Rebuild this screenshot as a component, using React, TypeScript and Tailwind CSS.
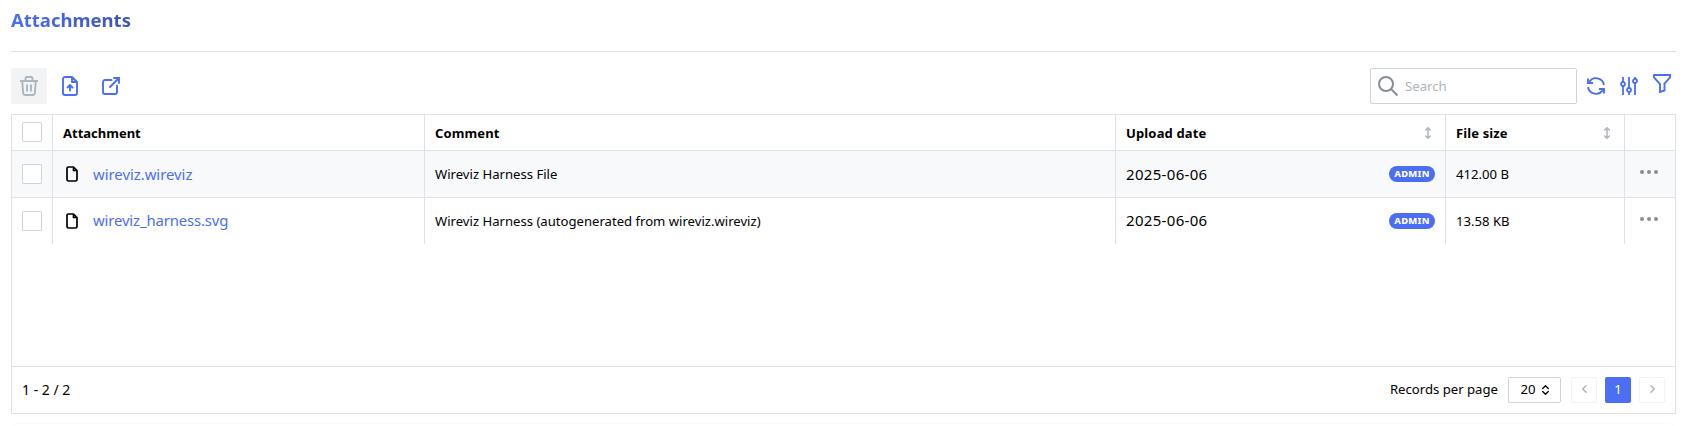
import React from "react";

const stroke = { fill: "none", stroke: "currentColor", strokeLinecap: "round", strokeLinejoin: "round" } as const;

function Trash() {
  return (
    <svg width="18" height="20" viewBox="0 0 18 20" {...stroke} strokeWidth="1.9" strokeLinecap="butt">
      <path d="M0 5h18M5.500 5V2.600Q5.500 1 7 1h4q1.500 0 1.500 1.600V5M2.200 5l1 12.400Q3.400 19 5 19h8q1.600 0 1.800-1.600L15.800 5M7 8.500v7M11 8.500v7" />
    </svg>
  );
}

function FileUpload() {
  return (
    <svg width="16" height="20" viewBox="0 0 16 20" {...stroke} strokeWidth="1.9">
      <path d="M10 1H3a2 2 0 0 0-2 2v14a2 2 0 0 0 2 2h10a2 2 0 0 0 2-2V6zM10 1v5h5M8 14.500V9.500M5.500 11.500L8 9l2.500 2.500" />
    </svg>
  );
}

function External() {
  return (
    <svg width="18" height="18" viewBox="0 0 18 18" {...stroke} strokeWidth="1.9" strokeLinejoin="miter">
      <path d="M9.500 3H3a2 2 0 0 0-2 2v10a2 2 0 0 0 2 2h10a2 2 0 0 0 2-2V8.500M8 10L17 1M12 1h5v5" />
    </svg>
  );
}

function SearchIcon() {
  return (
    <svg width="20" height="20" viewBox="0 0 20 20" {...stroke} strokeWidth="2" strokeLinecap="butt">
      <circle cx="8" cy="8" r="7" />
      <path d="M13 13l6.500 6.500" />
    </svg>
  );
}

function Refresh() {
  return (
    <svg width="18" height="18" viewBox="0 0 18 18" {...stroke} strokeWidth="1.9" strokeLinejoin="miter" strokeLinecap="butt">
      <path d="M2 5.500A8 8 0 0 1 17 8M1 1.500V6h5M16 12.500A8 8 0 0 1 1 10M17 16.500V12h-5" />
    </svg>
  );
}

function Sliders() {
  return (
    <svg width="18" height="18" viewBox="0 0 18 18" {...stroke} strokeWidth="1.8" strokeLinecap="butt">
      <circle cx="3" cy="7" r="2" />
      <circle cx="9" cy="13" r="2" />
      <circle cx="15" cy="4" r="2" />
      <path d="M3 0v5M3 9v9M9 0v11M9 15v3M15 0v2M15 6v12" />
    </svg>
  );
}

function Filter() {
  return (
    <svg width="18" height="19" viewBox="0 0 18 19" {...stroke} strokeWidth="1.9" strokeLinejoin="miter">
      <path d="M1 1h16v2.500L11.500 9.500v7L7 18V10L1 3.500z" />
    </svg>
  );
}

function SortIcon() {
  return (
    <svg width="6" height="12" viewBox="0 0 6 12" {...stroke} strokeWidth="1.500" className="text-[#adb5bd]">
      <path d="M3 1v10M.7 3L3 .8 5.300 3M.7 9L3 11.200 5.300 9" />
    </svg>
  );
}

function FileIcon() {
  return (
    <svg width="12" height="16" viewBox="0 0 12 16" {...stroke} strokeWidth="1.700">
      <path d="M7.500 1H2.500A1.500 1.500 0 0 0 1 2.500v11A1.500 1.500 0 0 0 2.500 15h7a1.500 1.500 0 0 0 1.500-1.500v-9zM7.500 1v3.500H11" />
    </svg>
  );
}

function Checkbox() {
  return <div className="size-5 rounded-[1px] border border-[#ced4da] bg-white" />;
}

const columns = "grid grid-cols-[41px_372px_691px_330px_179px_50px]";
const line = "border-l border-[#dee2e6]";

const rows = [
  { name: "wireviz.wireviz", comment: "Wireviz Harness File", size: "412.00 B", tone: "h-[47px] bg-[#f8f9fa] border-b", nameTone: "tracking-[-0.03px]", lift: "" },
  { name: "wireviz_harness.svg", comment: "Wireviz Harness (autogenerated from wireviz.wireviz)", size: "13.58 KB", tone: "h-[46px]", nameTone: "tracking-[-0.14px]", lift: "pb-[2px]" },
];

export default function App() {
  return (
    <main className="h-[426px] overflow-hidden bg-white pl-[11px] pr-[23px] font-['Noto_Sans','Open_Sans',sans-serif] text-[13px] text-black">
      <header className="flex h-[52px] items-start border-b border-[#dee2e6] pt-[7px]">
        <h1 className="bg-linear-to-r from-[#4c6ef5] to-[#3b54b4] bg-clip-text text-[18.500px] font-bold leading-[26px] text-transparent">Attachments</h1>
      </header>
      <div className="flex h-[62px] items-start justify-between pt-4 text-[#4c6ef5]">
        <div className="flex items-center">
          <button className="flex size-9 items-center justify-center rounded-[2px] bg-[#f1f3f5] text-[#adb5bd]"><Trash /></button>
          <button className="ml-[5px] flex size-9 items-center justify-center"><FileUpload /></button>
          <button className="ml-[5px] flex size-9 items-center justify-center"><External /></button>
        </div>
        <div className="flex items-start">
          <label className="flex h-9 w-[207px] items-center rounded-[2px] border border-[#ced4da] pl-[7px] text-[#868e96]">
            <SearchIcon />
            <input placeholder="Search" className="ml-[7px] w-40 pt-px text-[13.200px] outline-none placeholder:text-[#adb5bd]" />
          </label>
          <div className="flex pl-[10px] pr-[5px]">
            <span className="pt-[9px]"><Refresh /></span>
            <span className="ml-[15px] pt-[9px]"><Sliders /></span>
            <span className="ml-[15px] pt-[6px]"><Filter /></span>
          </div>
        </div>
      </div>
      <section className="flex h-[300px] flex-col border border-[#dee2e6]">
        <div className={`${columns} h-9 -ml-px border-b border-[#dee2e6] pl-0 font-bold`}>
          <div className="pl-[11px] pt-[7px]"><Checkbox /></div>
          <div className={`${line} flex items-center pl-[10px] pt-[2px]`}>Attachment</div>
          <div className={`${line} flex items-center pl-[10px] pt-[2px] tracking-[0.12px]`}>Comment</div>
          <div className={`${line} flex items-center justify-between pl-[10px] pr-[14px]`}><span className="pt-[2px] tracking-[0.15px]">Upload date</span><SortIcon /></div>
          <div className={`${line} flex items-center justify-between pl-[10px] pr-[14px]`}><span className="pt-[2px] tracking-[0.12px]">File size</span><SortIcon /></div>
          <div className={line} />
        </div>
        {rows.map((row) => (
          <div key={row.name} className={`${columns} ${row.tone} -ml-px border-[#dee2e6]`}>
            <div className="flex items-center border-l border-[#dee2e6] pl-[10px]"><Checkbox /></div>
            <div className={`${line} flex items-center pl-[13px]`}>
              <FileIcon />
              <a className={`ml-[15px] text-[14.900px] text-[#4c6ef5] ${row.nameTone} ${row.lift}`}>{row.name}</a>
            </div>
            <div className={`${line} flex items-center pl-[10px] pt-px text-[13.120px]`}>{row.comment}</div>
            <div className={`${line} flex items-center justify-between pl-[10px] pr-[10px]`}>
              <span className={`text-[15px] tracking-[0.320px] ${row.lift}`}>2025-06-06</span>
              <span className="flex h-4 w-[46px] items-center justify-center rounded-full bg-[#4c6ef5] text-[9.400px] font-extrabold tracking-[0.25px] text-white">ADMIN</span>
            </div>
            <div className={`${line} flex items-center pl-[10px] pt-px text-[13.120px]`}>{row.size}</div>
            <div className={`${line} flex items-center pb-[5px] pl-[15px] text-[#868e96]`}>
              <svg width="18" height="4" viewBox="0 0 18 4" fill="currentColor"><circle cx="2" cy="2" r="2" /><circle cx="9" cy="2" r="2" /><circle cx="16" cy="2" r="2" /></svg>
            </div>
          </div>
        ))}
        <footer className="mt-auto flex h-[47px] items-center border-t border-[#dee2e6] px-[10px] text-[14px]">
          <span className="pb-px">1 - 2 / 2</span>
          <span className="ml-auto pb-px text-[13.150px]">Records per page</span>
          <button className="ml-[10px] flex h-[26px] w-[53px] items-center justify-center gap-[6px] rounded-[2px] border border-[#ced4da] text-[13.200px]">
            20
            <svg width="7" height="10" viewBox="0 0 7 10" {...stroke} strokeWidth="1.300"><path d="M.7 3.500L3.500.8l2.800 2.700M.7 6.500l2.800 2.700 2.800-2.700" /></svg>
          </button>
          <button className="ml-[10px] flex size-[26px] items-center justify-center rounded-[2px] border border-[#f1f3f5] pb-[2px] text-[#adb5bd]">
            <svg width="5" height="8" viewBox="0 0 5 8" {...stroke} strokeWidth="1.500"><path d="M4 .8L.8 4 4 7.200" /></svg>
          </button>
          <button className="ml-2 flex size-[26px] items-center justify-center rounded-[2px] bg-[#4c6ef5] text-[13px] text-white">1</button>
          <button className="ml-2 flex size-[26px] items-center justify-center rounded-[2px] border border-[#f1f3f5] pb-[2px] text-[#adb5bd]">
            <svg width="5" height="8" viewBox="0 0 5 8" {...stroke} strokeWidth="1.500"><path d="M1 .8L4.200 4 1 7.200" /></svg>
          </button>
        </footer>
      </section>
      <div className="mt-[9px] h-5 rounded-t-lg border border-[#fafafa]" />
    </main>
  );
}
